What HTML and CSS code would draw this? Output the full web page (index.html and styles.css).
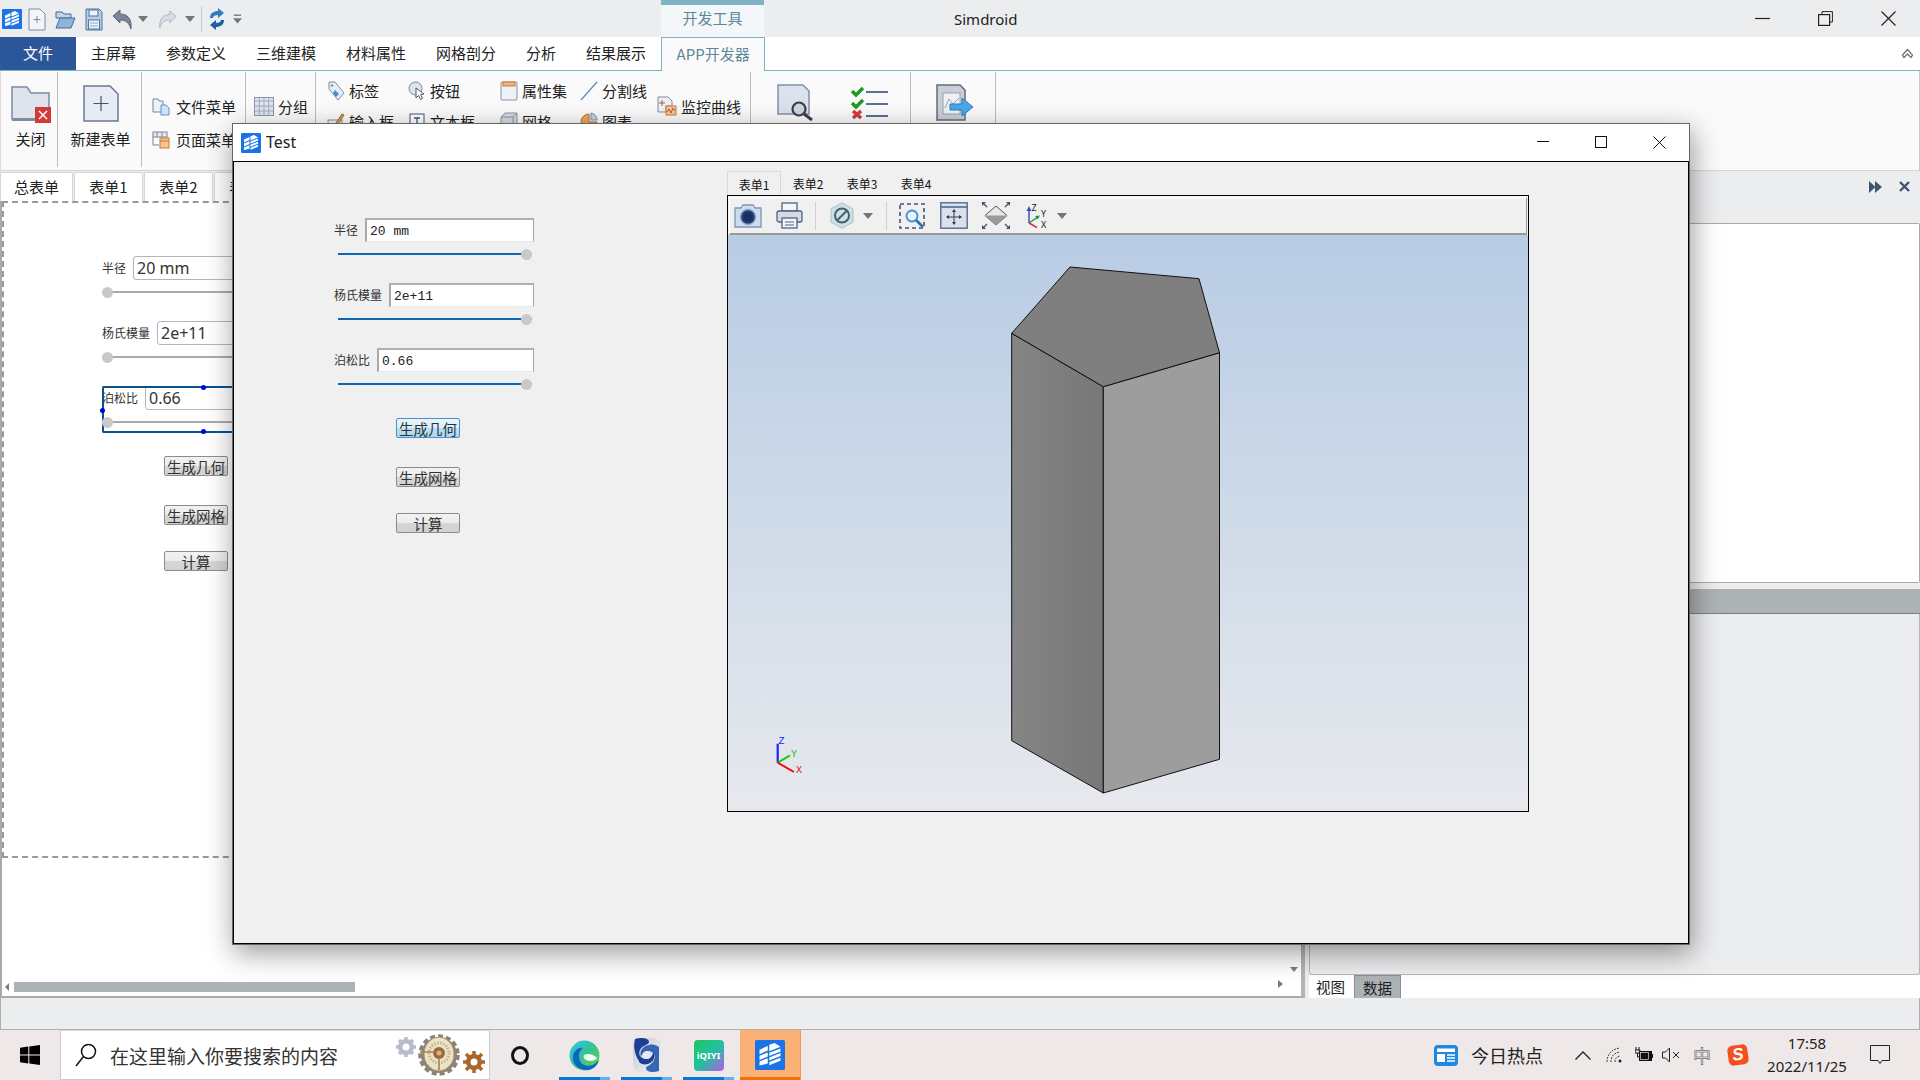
FILE: index.html
```html
<!DOCTYPE html>
<html lang="zh">
<head>
<meta charset="utf-8">
<title>Simdroid</title>
<link rel="stylesheet" href="styles.css">
</head>
<body>
<svg class="defs" width="0" height="0">
  <symbol id="logo" viewBox="0 0 20 20">
    <rect width="20" height="20" rx="1" fill="#1a74e8"/>
    <path d="M3 6.5 8.5 4v3L3 9.5zM3 10.5l5.5-2.2V11L3 13.4zM3 14.4l5.5-2.2v3.5L3 17z" fill="#fff"/>
    <path d="M9.5 3.2 13 2l4 2.5-7.5 3zM9.5 8.5 17 5.6v2L9.5 10.6zM9.5 11.6 17 8.7v2l-7.5 3zM9.5 14.7 17 11.8v2L9.5 16.8z" fill="#fff"/>
  </symbol>
  <symbol id="ddown" viewBox="0 0 10 6"><path d="M0 0h10L5 6z" fill="#70767c"/></symbol>
</svg>

<div class="app">
  <header class="titlebar">
    <div class="qat">
      <svg width="20" height="20"><use href="#logo"/></svg>
      <svg width="18" height="23" viewBox="0 0 18 23"><path d="M1 1h11l5 5v16H1z" fill="#f3f5f9" stroke="#7d8aa6"/><path d="M9 8v7M5.500 11.500h7" stroke="#7d8aa6"/></svg>
      <svg width="21" height="19" viewBox="0 0 21 19"><path d="M1 2h6l2 2h7v4H1z" fill="#c7d3e3" stroke="#3f6d99"/><path d="M1 18 5 8h15l-4 10z" fill="#8fb4d8" stroke="#3f6d99"/></svg>
      <svg width="18" height="23" viewBox="0 0 18 23"><path d="M1 1h13l3 3v18H1z" fill="#b7cbe4" stroke="#4a76a6"/><rect x="4" y="2" width="9" height="6" fill="#eef3f9" stroke="#4a76a6"/><rect x="3.500" y="12" width="11" height="9" fill="#eef3f9" stroke="#4a76a6"/><path d="M5 15h8M5 18h8" stroke="#8ea9c8"/></svg>
      <svg width="21" height="21" viewBox="0 0 21 21"><path d="M1 7 8 1v4c7 0 12 4 11 15-2-6-5-9-11-9v3z" fill="#7c8597" stroke="#5c6577"/></svg>
      <svg class="dd" width="10" height="6"><use href="#ddown"/></svg>
      <svg width="19" height="21" viewBox="0 0 21 21"><path d="M20 7 13 1v4C6 5 1 9 2 20c2-6 5-9 11-9v3z" fill="#d9dce2" stroke="#aeb3bc"/></svg>
      <svg class="dd" width="10" height="6"><use href="#ddown"/></svg>
      <i class="qat-sep"></i>
      <svg width="18" height="22" viewBox="0 0 18 22"><path d="M2 10C2 5 6 3 10 3V0l6 5-6 5V7C7 7 5 8 5 10z" fill="#2a7fc4"/><path d="M16 12c0 5-4 7-8 7v3l-6-5 6-5v3c3 0 5-1 5-3z" fill="#1c5f9e"/></svg>
      <svg class="dd" width="9" height="11" viewBox="0 0 10 11"><path d="M1 0h8v1.500H1z" fill="#70767c"/><path d="M0 4h10L5 10z" fill="#70767c"/></svg>
    </div>
    <div class="ctx-tab">开发工具</div>
    <div class="app-title">Simdroid</div>
    <div class="winctl">
      <button class="winbtn"><svg width="15" height="15"><path d="M0 7.500h15" stroke="#222" stroke-width="1.200"/></svg></button>
      <button class="winbtn"><svg width="15" height="15"><path d="M4 3V.600h10.400V11H11.500" fill="none" stroke="#222"/><rect x=".6" y="3.600" width="11" height="10.800" fill="none" stroke="#222" stroke-width="1.200"/></svg></button>
      <button class="winbtn"><svg width="15" height="15"><path d="M.5.500l14 14M14.500.500l-14 14" stroke="#222" stroke-width="1.200"/></svg></button>
    </div>
  </header>

  <nav class="tabsbar">
    <span class="rtab rtab-file">文件</span>
    <span class="rtab">主屏幕</span>
    <span class="rtab">参数定义</span>
    <span class="rtab">三维建模</span>
    <span class="rtab">材料属性</span>
    <span class="rtab">网格剖分</span>
    <span class="rtab">分析</span>
    <span class="rtab">结果展示</span>
    <span class="rtab rtab-active">APP开发器</span>
    <svg class="collapse" width="13" height="11" viewBox="0 0 13 11"><path d="M1.500 7 6.500 1.500 11.500 7 10 9.500 6.500 6 3 9.500z" fill="#fff" stroke="#6e7580" stroke-width="1.300"/></svg>
  </nav>

  <section class="ribbon">
    <div class="rgroup g-close">
      <svg width="40" height="38" viewBox="0 0 40 38"><path d="M1 2h15l4 6h18v26H1z" fill="#dfe3ec" stroke="#7f8ca6" stroke-width="1.500"/><path d="M1 33h37v3H1z" fill="#7f8ca6"/><rect x="24" y="22" width="16" height="16" fill="#d23b35"/><path d="M28 26l8 8M36 26l-8 8" stroke="#fff" stroke-width="1.500"/></svg>
      <span>关闭</span>
    </div>
    <div class="rgroup g-new">
      <svg width="36" height="37" viewBox="0 0 36 37"><path d="M1 1h26l8 8v27H1z" fill="#e7ebf3" stroke="#6a7897" stroke-width="1.500"/><path d="M18 11v15M10.500 18.500h15" stroke="#45536f" stroke-width="1.200"/></svg>
      <span>新建表单</span>
    </div>
    <div class="rgroup g-menus">
      <div class="ritem"><svg width="18" height="19" viewBox="0 0 18 19"><path d="M1 2h5l1 2h4v11H1z" fill="#eef1f6" stroke="#77849c"/><path d="M9 8h5l3 3v7H9z" fill="#cfe2f5" stroke="#5f94c7"/></svg><span>文件菜单</span></div>
      <div class="ritem"><svg width="18" height="19" viewBox="0 0 18 19"><rect x="1" y="2" width="14" height="5" fill="#e8ebf1" stroke="#77849c"/><path d="M5 2v5M10 2v5M1 7v8h6" fill="none" stroke="#77849c"/><rect x="8" y="8" width="9" height="10" fill="#f6c48c" stroke="#cc7a31"/><path d="M8 11h9" stroke="#cc7a31"/></svg><span>页面菜单</span></div>
    </div>
    <div class="rgroup g-group">
      <div class="ritem"><svg width="20" height="19" viewBox="0 0 20 19"><rect x=".5" y=".5" width="19" height="18" fill="#dfe5ee" stroke="#8793a8"/><path d="M.5 4h19M5.300 .5v18M10 .5v18M14.700 .5v18M.5 9h19M.5 14h19" stroke="#a0abbd"/></svg><span>分组</span></div>
    </div>
    <div class="rgroup g-controls">
      <div class="ritem"><svg width="18" height="20" viewBox="0 0 18 20"><path d="M2 1h6l9 11-6 7-9-11z" fill="#e9edf5" stroke="#7f8ca6"/><path d="M8 9l4 4-3 3-3-4z" fill="#3f8ed6"/><circle cx="5" cy="4.500" r="1.200" fill="#7f8ca6"/></svg><span>标签</span></div>
      <div class="ritem"><svg width="18" height="20" viewBox="0 0 18 20"><circle cx="7.500" cy="7.500" r="6.500" fill="#dbe4f0" stroke="#7f8ca6"/><path d="M8 7l8 6-3.500.5 2 4-2 1-2-4L8 17z" fill="#fff" stroke="#555"/></svg><span>按钮</span></div>
      <div class="ritem"><svg width="18" height="20" viewBox="0 0 18 20"><rect x="1" y="1" width="16" height="18" rx="1" fill="#eef1f6" stroke="#8793a8"/><rect x="3" y="1" width="12" height="4" fill="#f2b27c" stroke="#c87a38"/></svg><span>属性集</span></div>
      <div class="ritem"><svg width="18" height="20" viewBox="0 0 18 20"><path d="M1 19 17 1" stroke="#5d8fc5" stroke-width="1.300"/></svg><span>分割线</span></div>
      <div class="ritem ritem-tall"><svg width="20" height="20" viewBox="0 0 20 20"><path d="M1 1h10l4 4v5H9v6H1z" fill="#eef1f6" stroke="#7f8ca6"/><path d="M5 4v6M2 7h6" stroke="#b5563a"/><rect x="9" y="10" width="10" height="9" fill="#f8c59a" stroke="#cc7a31"/><path d="M10 16l2-3 2 4 2-5 2 3" fill="none" stroke="#b5563a"/></svg><span>监控曲线</span></div>
      <div class="ritem"><svg width="18" height="20" viewBox="0 0 18 20"><rect x="1" y="8" width="14" height="9" fill="#eef1f6" stroke="#7f8ca6"/><path d="M7 14 15 2l2 1-8 12z" fill="#e0a34f" stroke="#8a6a36"/></svg><span>输入框</span></div>
      <div class="ritem"><svg width="18" height="20" viewBox="0 0 18 20"><rect x="2" y="2" width="14" height="15" fill="#fff" stroke="#3d5577"/><path d="M6 6h6M9 6v8" stroke="#3d5577" stroke-width="1.300"/></svg><span>文本框</span></div>
      <div class="ritem"><svg width="18" height="20" viewBox="0 0 18 20"><path d="M1 5 5 1h12v13l-4 4H1z" fill="#d6d9df" stroke="#8793a8"/><path d="M1 5h12v13M13 5l4-4" fill="none" stroke="#8793a8"/></svg><span>网格</span></div>
      <div class="ritem"><svg width="18" height="20" viewBox="0 0 18 20"><path d="M9 2a8 8 0 1 0 8 8H9z" fill="#f0a35c" stroke="#b5703a"/><path d="M11 1a7 7 0 0 1 6 7h-6z" fill="#c3cfdf" stroke="#7f8ca6"/></svg><span>图表</span></div>
    </div>
    <div class="rgroup g-check">
      <svg width="37" height="37" viewBox="0 0 37 37"><path d="M1 1h25l6 6v23H1z" fill="#dce2ed" stroke="#8090ad" stroke-width="1.500"/><circle cx="22" cy="25" r="6.500" fill="#cfd6e2" stroke="#3b3f46" stroke-width="2.200"/><path d="M27 30l8 6" stroke="#3b3f46" stroke-width="3"/></svg>
      <svg width="37" height="33" viewBox="0 0 37 33"><path d="M1 5l4 4 7-7M1 17l4 4 7-7" fill="none" stroke="#1f9a25" stroke-width="3.500"/><path d="M2 25l8 7M10 25l-8 7" stroke="#cc3b3b" stroke-width="3.500"/><path d="M15 6h22M15 18h22M15 30h22" stroke="#5d6f92" stroke-width="2"/></svg>
    </div>
    <div class="rgroup g-export">
      <svg width="38" height="37" viewBox="0 0 38 37"><path d="M1 1h23l5 5v30H1z" fill="#c9ced7" stroke="#676d78" stroke-width="1.500"/><rect x="7" y="9" width="17" height="21" fill="#eef1f5" stroke="#9aa2ae"/><path d="M9 24l4-9 4 5 6-6" fill="none" stroke="#9aa2ae"/><path d="M14 20h12v-6l11 9-11 9v-6H14z" fill="#4ba8e6" stroke="#2b7fbd"/></svg>
    </div>
  </section>

  <main class="middle">
    <div class="designer">
      <div class="sheet-tabs">
        <span class="sheet-tab sheet-tab-active">总表单</span>
        <span class="sheet-tab">表单1</span>
        <span class="sheet-tab">表单2</span>
        <span class="sheet-tab">表单3</span>
      </div>
      <div class="canvas">
        <div class="design-area">
          <form class="form form-design">
            <span class="sel-box"><i class="h h-t"></i><i class="h h-l"></i><i class="h h-b"></i></span>
            <div class="field"><label>半径</label><span class="input">20 mm</span></div>
            <div class="slider"><i class="thumb"></i></div>
            <div class="field"><label>杨氏模量</label><span class="input">2e+11</span></div>
            <div class="slider"><i class="thumb"></i></div>
            <div class="field"><label>泊松比</label><span class="input">0.66</span></div>
            <div class="slider"><i class="thumb"></i></div>
            <button type="button" class="pbtn">生成几何</button>
            <button type="button" class="pbtn">生成网格</button>
            <button type="button" class="pbtn">计算</button>
          </form>
        </div>
        <div class="hscroll"><i class="arrow-l"></i><i class="hthumb"></i></div>
        <i class="arrow-d"></i><i class="arrow-r"></i>
      </div>
    </div>
    <aside class="side">
      <div class="side-head">
        <svg width="13" height="12" viewBox="0 0 13 12"><path d="M0 0l6.500 6L0 12zM6 0l7 6-7 6z" fill="#3d5573"/></svg>
        <svg width="11" height="11" viewBox="0 0 11 11"><path d="M1 1l9 9M10 1l-9 9" stroke="#3d5573" stroke-width="2.400"/></svg>
      </div>
      <div class="side-panel"></div>
      <div class="side-bar"></div>
      <div class="side-lower"></div>
      <div class="side-tabs"><span class="side-tab">视图</span><span class="side-tab side-tab-on">数据</span></div>
    </aside>
  </main>

  <footer class="statusbar"></footer>

  <div class="taskbar">
    <div class="tb-start"><svg width="20" height="20" viewBox="0 0 20 20"><path d="M0 2.800 8.300 1.600v7.900H0zM9.300 1.500 20 0v9.500H9.300zM0 10.500h8.300v7.900L0 17.200zM9.300 10.500H20V20L9.300 18.500z" fill="#000"/></svg></div>
    <div class="tb-search">
      <svg width="22" height="24" viewBox="0 0 22 24"><circle cx="13.500" cy="8.500" r="7" fill="none" stroke="#111" stroke-width="1.500"/><path d="M8.500 13.500 1 23" stroke="#111" stroke-width="1.500"/></svg>
      <span class="tb-search-text">在这里输入你要搜索的内容</span>
      <svg class="doodle" width="90" height="42" viewBox="0 0 90 42">
        <g fill="#b9bbcd"><circle cx="10" cy="13" r="8"/><g stroke="#b9bbcd" stroke-width="3.500"><path d="M10 3v20M0 13h20M3 6l14 14M17 6 3 20"/></g></g><circle cx="10" cy="13" r="3.500" fill="#fff"/>
        <circle cx="43" cy="21" r="19" fill="none" stroke="#8a8076" stroke-width="3.500" stroke-dasharray="5 3"/><circle cx="43" cy="21" r="18" fill="#8f8378"/><ellipse cx="43" cy="20" rx="15" ry="17" fill="#ece3c6" stroke="#a78e6a"/><circle cx="43" cy="19" r="10" fill="none" stroke="#c9b48a" stroke-width="3" stroke-dasharray="1.500 1.500"/><circle cx="43" cy="19" r="6" fill="#9a6b3a"/><circle cx="43" cy="19" r="2.500" fill="#d9b27d"/><path d="M24 18h14M43 25v11" stroke="#a6834f" stroke-width="1.600"/>
        <circle cx="78" cy="28" r="8" fill="#a7692a"/><g stroke="#a7692a" stroke-width="3.500"><path d="M78 17v22M67 28h22M70 20l16 16M86 20 70 36"/></g><circle cx="78" cy="28" r="3.500" fill="#fff"/>
      </svg>
    </div>
    <div class="tb-cortana"><i class="ring"></i></div>
    <div class="tb-app">
      <svg width="31" height="31" viewBox="0 0 31 31"><defs><linearGradient id="edgeA" x1="0" y1="0" x2="1" y2="1"><stop offset="0" stop-color="#35c1f1"/><stop offset=".5" stop-color="#34c48f"/><stop offset="1" stop-color="#74d63a"/></linearGradient></defs><circle cx="15.500" cy="15.500" r="15" fill="url(#edgeA)"/><path d="M30 20c-2 7-8 11-14 10C8 29 3 23 4 16 5 10 10 7 14 8c-4 3-5 8-3 13 3 6 12 7 19-1z" fill="#0d66c2"/><path d="M15 15c4-2 9-1 13 3-2 3-7 4-11 2-2-1-3-3-2-5z" fill="#eafaf5"/></svg>
    </div>
    <div class="tb-app">
      <svg width="30" height="36" viewBox="0 0 30 36"><defs><linearGradient id="swA" x1="0" y1="0" x2="1" y2="1"><stop offset="0" stop-color="#c8ccd4"/><stop offset="1" stop-color="#eef0f4"/></linearGradient></defs><rect x="1" y="1" width="28" height="34" rx="8" fill="url(#swA)"/><path d="M3 2c6-2 14-1 14 3 0 3-7 3-9 8-2 4 0 8 5 9 5 0 8-3 8-7 3 4 1 10-5 12-4 1-7 0-9-2V24C3 18 1 10 3 2z" fill="#1a3f94"/><path d="M27 34c-6 2-13 1-13-3 0-2 6-3 8-8 2-4 0-8-5-9-4 0-7 2-8 6-2-5 1-11 8-12 4-1 7 0 10 2z" fill="#1a4fa8" opacity=".85"/><circle cx="15" cy="18" r="4" fill="#e6eaf1"/></svg>
    </div>
    <div class="tb-app"><span class="iqiyi">iQIYI</span></div>
    <div class="tb-app tb-app-active"><svg width="30" height="30"><use href="#logo"/></svg></div>
    <div class="tray">
      <svg width="24" height="21" viewBox="0 0 24 21"><rect width="24" height="21" rx="4" fill="#1f88e0"/><rect x="3" y="3.500" width="18" height="3.500" fill="#fff"/><rect x="3" y="9" width="8" height="8" fill="#fff"/><path d="M13 10h8M13 13h8M13 16h8" stroke="#fff" stroke-width="1.600"/></svg>
      <span class="hot">今日热点</span>
      <svg width="16" height="9" viewBox="0 0 16 9"><path d="M.5 8.500 8 1l7.500 7.500" fill="none" stroke="#222" stroke-width="1.300"/></svg>
      <svg width="16" height="16" viewBox="0 0 16 16"><circle cx="14" cy="14" r="1.500" fill="#222"/><path d="M9 15c0-3 1-5 5-6M5 15C5 9 8 6 14 5M1 15C1 7 6 2 14 1" fill="none" stroke="#444" stroke-width="1" stroke-dasharray="2 1"/></svg>
      <svg width="18" height="16" viewBox="0 0 18 16"><path d="M1 0v3M4 0v3M0 3h5v3H0zM2.500 6v4h2" fill="none" stroke="#111"/><rect x="4" y="4" width="13" height="10" fill="#111"/><rect x="5.500" y="5.500" width="8" height="7" fill="#111" stroke="#fff" stroke-width=".6"/><rect x="17" y="7" width="1" height="4" fill="#111"/></svg>
      <svg width="19" height="16" viewBox="0 0 19 16"><path d="M.5 5h3l4-4v14l-4-4h-3z" fill="none" stroke="#222"/><path d="M11 5l6 6M17 5l-6 6" stroke="#222"/></svg>
      <span class="ime">中</span>
      <span class="sogou">S</span>
      <div class="clock"><span>17:58</span><span>2022/11/25</span></div>
      <svg class="notif" width="20" height="20" viewBox="0 0 20 20"><path d="M.5.500h19v15H12l-2 3-2-3H.5z" fill="none" stroke="#222"/></svg>
    </div>
  </div>
</div>

<div class="window">
  <div class="win-title">
    <svg width="20" height="20"><use href="#logo"/></svg>
    <span class="win-name">Test</span>
    <div class="win-ctl">
      <span class="wbtn"><svg width="12" height="12"><path d="M0 5.500h12" stroke="#111"/></svg></span>
      <span class="wbtn"><svg width="12" height="12"><rect x=".5" y=".5" width="11" height="11" fill="none" stroke="#111"/></svg></span>
      <span class="wbtn"><svg width="13" height="13"><path d="M.5.500l12 12M12.500.500l-12 12" stroke="#111"/></svg></span>
    </div>
  </div>
  <div class="win-body">
    <form class="form form-run">
      <div class="field"><label>半径</label><span class="input">20 mm</span></div>
      <div class="slider"><i class="thumb"></i></div>
      <div class="field"><label>杨氏模量</label><span class="input">2e+11</span></div>
      <div class="slider"><i class="thumb"></i></div>
      <div class="field"><label>泊松比</label><span class="input">0.66</span></div>
      <div class="slider"><i class="thumb"></i></div>
      <button type="button" class="pbtn pbtn-hover">生成几何</button>
      <button type="button" class="pbtn">生成网格</button>
      <button type="button" class="pbtn">计算</button>
    </form>
    <div class="viewer">
      <div class="v-tabs">
        <span class="v-tab v-tab-on">表单1</span>
        <span class="v-tab">表单2</span>
        <span class="v-tab">表单3</span>
        <span class="v-tab">表单4</span>
      </div>
      <div class="v-frame">
        <div class="v-tools">
          <svg width="28" height="25" viewBox="0 0 28 25"><path d="M1 5h6l2-3h10l2 3h6v19H1z" fill="#cddcee" stroke="#7f94b5" stroke-width="1.300"/><circle cx="14" cy="14" r="7.500" fill="#1d3a70" stroke="#8fa5c4" stroke-width="1.500"/><circle cx="14" cy="14" r="4" fill="#1c2f5c"/></svg>
          <svg width="27" height="27" viewBox="0 0 27 27"><rect x="6" y="1" width="15" height="8" fill="#f3f5f8" stroke="#4f627f" stroke-width="1.300"/><rect x="1" y="9" width="25" height="11" rx="2" fill="#d3dae5" stroke="#4f627f" stroke-width="1.300"/><rect x="6" y="16" width="15" height="10" fill="#f3f5f8" stroke="#4f627f" stroke-width="1.300"/><path d="M9 20h9M9 23h9" stroke="#4f627f"/></svg>
          <i class="v-sep"></i>
          <svg width="24" height="27" viewBox="0 0 24 27"><path d="M12 .8 23 7v13l-11 6.200L1 20V7z" fill="#cfe0e5" stroke="#a9bfc7"/><circle cx="12" cy="13.500" r="7" fill="none" stroke="#3f6370" stroke-width="2"/><path d="M7.500 18 16.500 9" stroke="#3f6370" stroke-width="2"/></svg>
          <svg width="10" height="6"><use href="#ddown"/></svg>
          <i class="v-sep"></i>
          <svg width="26" height="26" viewBox="0 0 26 26"><rect x="1" y="1" width="24" height="24" fill="none" stroke="#40567a" stroke-width="1.600" stroke-dasharray="4 3"/><circle cx="13" cy="13" r="5.500" fill="#eaf2fa" stroke="#3f8ed6" stroke-width="1.800"/><path d="M17 17l7 7" stroke="#2b73b8" stroke-width="2.600"/></svg>
          <svg width="28" height="27" viewBox="0 0 28 27"><rect x=".8" y=".8" width="26.400" height="25.400" fill="#dbe1ec" stroke="#546a8e" stroke-width="1.400"/><path d="M1 5h26" stroke="#546a8e" stroke-width="1.600"/><path d="M14 8v14M7 15h14" stroke="#2f3d55"/><path d="M14 7l-2 3h4zM14 23l-2-3h4zM6 15l3-2v4zM22 15l-3-2v4z" fill="#2f3d55"/></svg>
          <svg width="28" height="27" viewBox="0 0 28 27"><path d="M14 4 25 13.500 14 23 3 13.500z" fill="#e8e8e8" stroke="#555"/><path d="M3 13.500h22L14 23z" fill="#9a9a9a"/><g stroke="#3d5573" stroke-width="1.300"><path d="M1 1l4 4M27 1l-4 4M1 26l4-4M27 26l-4-4"/></g><g fill="#3d5573"><path d="M0 0h4L0 4zM28 0h-4l4 4zM0 27h4l-4-4zM28 27h-4l4-4z"/></g></svg>
          <svg width="25" height="26" viewBox="0 0 25 26"><path d="M4 20V7" stroke="#2a57c4" stroke-width="1.500"/><path d="M4 3 1.500 8h5z" fill="#2a57c4"/><path d="M4 20 13 14" stroke="#1f9a4a" stroke-width="1.500"/><path d="M15 12.500l-5 .6 2.500 3.400z" fill="#1f9a4a"/><path d="M4 20l8 4.500" stroke="#d8352f" stroke-width="1.500"/><text x="6.500" y="8" class="ax">Z</text><text x="16" y="14" class="ax">Y</text><text x="16" y="25" class="ax">X</text></svg>
          <svg width="10" height="6"><use href="#ddown"/></svg>
        </div>
        <div class="v-port">
          <svg width="800" height="577" viewBox="0 0 800 577">
            <defs><linearGradient id="faceL" x1="0" y1="0" x2="1" y2="0"><stop offset="0" stop-color="#858585"/><stop offset="1" stop-color="#777"/></linearGradient></defs>
            <polygon points="283.700,98.300 375.300,151.700 375.300,558 283.700,505.700" fill="url(#faceL)" stroke="#111"/>
            <polygon points="375.300,151.700 491.500,117.700 491.500,524.300 375.300,558" fill="#9d9d9d" stroke="#111"/>
            <polygon points="283.700,98.300 342,32 471,43.700 491.500,117.700 375.300,151.700" fill="#7f7f7f" stroke="#111"/>
            <path d="M49.700 527.700V508.700" stroke="#2020ff" stroke-width="2.200"/>
            <path d="M49.700 527.700 62 520.300" stroke="#10d010" stroke-width="2"/>
            <path d="M49.700 527.700 66 537" stroke="#f00" stroke-width="2"/>
            <text x="50.500" y="509" class="tri tri-z">Z</text>
            <text x="63" y="521.500" class="tri tri-y">Y</text>
            <text x="68" y="538" class="tri tri-x">X</text>
          </svg>
        </div>
      </div>
    </div>
  </div>
</div>
</body>
</html>
```

FILE: styles.css
```css
* { box-sizing: border-box; }
html, body { margin: 0; padding: 0; }
body {
  width: 1920px;
  height: 1080px;
  overflow: hidden;
  position: relative;
  font-family: "Noto Sans CJK SC", "Noto Sans", sans-serif;
  color: #222;
  background: #ecedef;
}
svg { display: block; flex: none; }
.defs { position: absolute; }
i { display: block; }

.app { display: flex; flex-direction: column; height: 1080px; }

/* title bar */
.titlebar { height: 37px; background: #ecedef; display: grid; grid-template-columns: 661px 103px 1fr auto; align-items: stretch; }
.qat { display: grid; grid-template-columns: 26px 27px 30px 27px 26px 20px 27px 16px 7px 25px 10px; padding-left: 2px; align-items: center; }
.qat-sep { width: 1px; height: 26px; background: #c8cacd; }
.ctx-tab { background: #f3f7fa; border-top: 5px solid #7fb3c3; color: #5d8798; font-size: 15px; line-height: 26px; text-align: center; }
.app-title { font-family: "Noto Sans", sans-serif; font-size: 15px; line-height: 38px; padding-left: 190px; color: #222; }
.winctl { display: flex; }
.winbtn { width: 63px; border: 0; padding: 0; background: none; display: flex; align-items: center; justify-content: center; margin-top: -2px; }

/* ribbon tabs */
.tabsbar { height: 34px; background: #fff; display: flex; align-items: stretch; border-bottom: 1px solid #7fb3c3; position: relative; }
.rtab { padding: 0 15px; font-size: 15px; line-height: 32px; color: #222; white-space: nowrap; }
.rtab-file { width: 76px; padding: 0; text-align: center; background: #2b579a; color: #fff; }
.rtab-active { border: 1px solid #7fb3c3; border-bottom: 0; background: #fafafa; color: #5d8798; margin-left: 0; width: 104px; height: 34px; padding: 0; text-align: center; }
.collapse { margin: 11px 6px 0 auto; }

/* ribbon */
.ribbon { height: 100px; background: #fafafa; border-bottom: 1px solid #d4d5d7; border-left: 1px solid #ddd; border-right: 1px solid #ccc; display: flex; flex: none; font-size: 15px; padding-top: 1px; }
.rgroup { border-right: 1px solid #bdbdbd; height: 95px; flex: none; }
.ritem { display: flex; align-items: center; gap: 6px; height: 33px; white-space: nowrap; }
.g-close { width: 57px; display: flex; flex-direction: column; align-items: center; padding-top: 13px; padding-left: 3px; gap: 5px; }
.g-new { width: 84px; display: flex; flex-direction: column; align-items: center; padding-top: 13px; padding-left: 2px; gap: 6px; }
.g-menus { width: 104px; padding: 18px 0 0 10px; }
.g-group { width: 70px; padding: 18px 0 0 8px; }
.g-group .ritem { gap: 4px; }
.g-controls { width: 435px; display: grid; grid-template-columns: 81px 92px 80px 77px 94px; grid-template-rows: 31px 31px; padding: 3px 0 0 11px; }
.g-controls .ritem { height: 31px; gap: 4px; }
.ritem-tall { grid-column: 5; grid-row: 1 / 3; align-self: center; }
.g-check { width: 160px; display: flex; padding: 12px 0 0 26px; gap: 37px; }
.g-check svg:last-child { margin-top: 2px; }
.g-export { width: 85px; padding: 12px 0 0 25px; }

/* middle */
.middle { flex: 1; display: flex; min-height: 0; }
.designer { width: 1305px; display: flex; flex-direction: column; }
.sheet-tabs { height: 30px; display: flex; padding-top: 1px; gap: 1px; background: #ecedef; flex: none; }
.sheet-tab { width: 69px; height: 29px; background: #fff; border: 1px solid #d4d5d7; border-bottom: 0; font-size: 15px; line-height: 27px; text-align: center; border-radius: 2px 2px 0 0; }
.sheet-tab-active { width: 73px; }
.canvas { flex: 1; position: relative; background: #fff; border-left: 2px solid #aaa; border-bottom: 2px solid #aaa; border-right: 4px solid #b4b4b4; display: flex; flex-direction: column; }
.design-area { width: 1100px; height: 657px; border: 2px dashed #999; border-right: 0; padding: 53px 0 0 98px; flex: none; }
.hscroll { margin-top: auto; margin-bottom: 4px; height: 10px; display: flex; align-items: center; }
.arrow-l { margin-left: 3px; border: 4px solid transparent; border-left: 0; border-right: 4px solid #6d7f8f; height: 8px; width: 4px; }
.hthumb { width: 341px; height: 10px; background: #adb2b5; margin-left: 5px; }
.arrow-d { position: absolute; right: 3px; bottom: 24px; border: 4px solid transparent; border-top: 5px solid #6d7f8f; border-bottom: 0; border-left-width: 4px; width: 8px; height: 5px; }
.arrow-r { position: absolute; right: 18px; bottom: 8px; border: 4px solid transparent; border-left: 5px solid #6d7f8f; border-right: 0; width: 5px; height: 8px; }

/* parameter form */
.form { width: 200px; display: flex; flex-direction: column; position: relative; }
.field { display: flex; align-items: center; gap: 7px; height: 24px; }
.field label { font-size: 12px; color: #333; white-space: nowrap; flex: none; line-height: 20px; }
.input { flex: 1; height: 24px; border: 1px solid #a9a9a9; background: #fff; padding-left: 3px; line-height: 22px; }
.slider { height: 2px; margin: 11px 0 28px 4px; width: 194px; position: relative; }
.thumb { position: absolute; width: 11px; height: 11px; border-radius: 50%; background: #c9c9c9; top: -4.500px; }
.pbtn { display: block; width: 64px; height: 20px; margin: 0 0 29px 62px; padding: 0; border: 1px solid #8c8c8c; border-radius: 2px; background: linear-gradient(#f2f2f2 0, #ececec 50%, #d6d6d6 50%, #d2d2d2 100%); font-family: inherit; font-size: 14.500px; line-height: 17px; color: #333; white-space: nowrap; }
.pbtn:nth-last-child(1) { margin-top: -3px; }
.slider + .pbtn { margin-top: 5px; }

.form-run .input { font-family: "Liberation Mono", monospace; font-size: 13px; color: #222; border-width: 2px 1px 1px 2px; border-color: #b0b0b0 #a9a9a9 #e8e8e8 #a9a9a9; line-height: 23px; }
.form-run .slider { background: #0f66b5; }
.form-run .thumb { right: 0; }
.pbtn-hover { border-color: #4a90c8; background: linear-gradient(#e4f4fd 0, #d9effb 50%, #bbe0f7 50%, #a9d6f3 100%); }

.form-design .input { font-family: "Noto Sans", sans-serif; font-size: 16px; color: #333; border-radius: 3px; border-color: #b5b5b5; padding-left: 3px; }
.form-design .slider { background: #aaa; width: 300px; margin-left: 0; }
.form-design .thumb { left: 0; }
.form-design .field { width: 300px; }
.sel-box { position: absolute; left: 0; top: 130px; width: 300px; height: 47px; border: 2px solid #0a5190; border-right: 0; border-radius: 2px; pointer-events: none; }
.h { position: absolute; width: 5px; height: 5px; background: #0000e6; border-radius: 50%; }
.h-t { left: 97px; top: -3px; }
.h-l { left: -4px; top: 20px; }
.h-b { left: 97px; bottom: -3px; }

/* side panel */
.side { flex: 1; display: flex; flex-direction: column; padding-left: 4px; background: #ecedef; }
.side-head { height: 52px; display: flex; justify-content: flex-end; gap: 17px; padding: 10px 10px 0 0; flex: none; }
.side-panel { height: 360px; background: #fff; border: 1px solid #aaa; border-left: 0; flex: none; border-radius: 0 2px 2px 0; }
.side-bar { height: 25px; margin-top: 6px; background: #adb2b5; border-bottom: 1px solid #7b7f83; flex: none; }
.side-lower { flex: 1; border: 1px solid #b5b5b5; border-top: 0; border-radius: 0 0 3px 3px; }
.side-tabs { height: 23px; background: #fff; display: flex; gap: 8px; padding-left: 7px; font-size: 14.500px; flex: none; }
.side-tab { width: 30px; line-height: 23px; white-space: nowrap; }
.side-tab-on { width: 47px; background: #adb2b5; border: 1px solid #8a8e92; border-bottom: 0; text-align: center; line-height: 24px; }

/* status */
.statusbar { height: 32px; background: #ecedef; border: 1px solid #b0b0b0; border-top: 0; flex: none; }

/* taskbar */
.taskbar { height: 50px; background: #efe8e8; display: flex; align-items: stretch; flex: none; position: relative; }
.tb-start { width: 60px; display: flex; align-items: center; justify-content: center; }
.tb-search { width: 430px; background: #fff; border: 1px solid #ccc; border-top: 1px solid #d8d8d8; display: flex; align-items: center; padding-left: 14px; }
.tb-search-text { font-size: 19px; color: #333; margin-left: 13px; white-space: nowrap; }
.doodle { margin-left: 58px; }
.tb-cortana { width: 60px; margin-right: 9px; display: flex; align-items: center; justify-content: center; }
.ring { width: 18px; height: 19px; border-radius: 50%; border: 3px solid #111; }
.tb-app { width: 51px; margin-right: 11px; display: flex; align-items: center; justify-content: center; position: relative; }
.tb-app::after { content: ""; position: absolute; left: 0; right: 0; bottom: 0; height: 3px; background: linear-gradient(90deg, #0a78d6 80%, #66b0ea 80%); }
.tb-app-active { width: 61px; margin-right: 0; margin-left: -5px; background: #fbb175; border-right: 1px solid #f59a52; }
.tb-app-active::after { background: #f5700a; }
.iqiyi { width: 30px; height: 31px; border-radius: 4px; background: linear-gradient(135deg, #21c45e 0, #1fc2a0 50%, #b65be8 100%); color: #fff; font-family: "Noto Sans", sans-serif; font-weight: 700; font-size: 9.500px; line-height: 31px; text-align: center; white-space: nowrap; }
.tray { margin-left: auto; width: 486px; display: grid; grid-template-columns: 37px 104px 31px 29px 27px 31px 35px 37px 105px 50px; align-items: center; }
.hot { font-size: 18px; color: #222; white-space: nowrap; }
.ime { font-size: 18px; color: transparent; -webkit-text-stroke: .5px #444; line-height: 1; }
.sogou { width: 20px; height: 20px; border-radius: 5px; background: #f4511e; color: #fff; font: italic 700 17px/20px "Liberation Sans", sans-serif; text-align: center; transform: rotate(-8deg); }
.clock { display: flex; flex-direction: column; align-items: center; font-family: "Noto Sans", sans-serif; font-size: 15px; line-height: 23px; width: 84px; white-space: nowrap; color: #222; }

/* floating window */
.window { position: absolute; left: 232px; top: 123px; width: 1458px; height: 822px; background: #f0f0f0; border: 1px solid #666; box-shadow: 2px 8px 26px rgba(0,0,0,.4); display: flex; flex-direction: column; }
.win-title { height: 38px; background: #fff; border-bottom: 1px solid #000; display: flex; align-items: center; padding-left: 8px; flex: none; }
.win-name { font-family: "Noto Sans", sans-serif; font-size: 16px; margin-left: 5px; margin-top: -2px; color: #222; }
.win-ctl { margin-left: auto; display: flex; }
.wbtn { width: 58.500px; display: flex; justify-content: center; }
.win-body { flex: 1; display: grid; grid-template-columns: 493px 802px; border: 1px solid #000; border-top: 0; }
.form-run { margin: 56px 0 0 100px; }

.viewer { padding-top: 9px; display: flex; flex-direction: column; height: 650px; }
.v-tabs { display: flex; height: 24px; flex: none; }
.v-tab { width: 54px; font-size: 12px; line-height: 26px; text-align: center; color: #111; white-space: nowrap; }
.v-tab-on { border: 1px solid #d9d9d9; border-bottom: 0; }
.v-frame { height: 617px; border: 1px solid #000; display: flex; flex-direction: column; flex: none; }
.v-tools { height: 38px; flex: none; margin: 1px 1px 0; border: 1px solid #fff; border-right: 1px solid #999; border-bottom: 2px solid #999; display: grid; grid-template-columns: 42px 39px 15px 33px 23px 13px 41px 42px 43px 32px 10px; align-items: center; padding-left: 4px; }
.v-sep { width: 1px; height: 28px; background: #cfcfcf; }
.v-port { flex: 1; background: linear-gradient(#b8cce4, #e7e9ed); overflow: hidden; }
.ax { font: 9px "Noto Sans", sans-serif; fill: #222; }
.tri { font: 10px "Liberation Mono", monospace; }
.tri-z { fill: #1a1aff; }
.tri-y { fill: #10c010; }
.tri-x { fill: #e01010; }
```
